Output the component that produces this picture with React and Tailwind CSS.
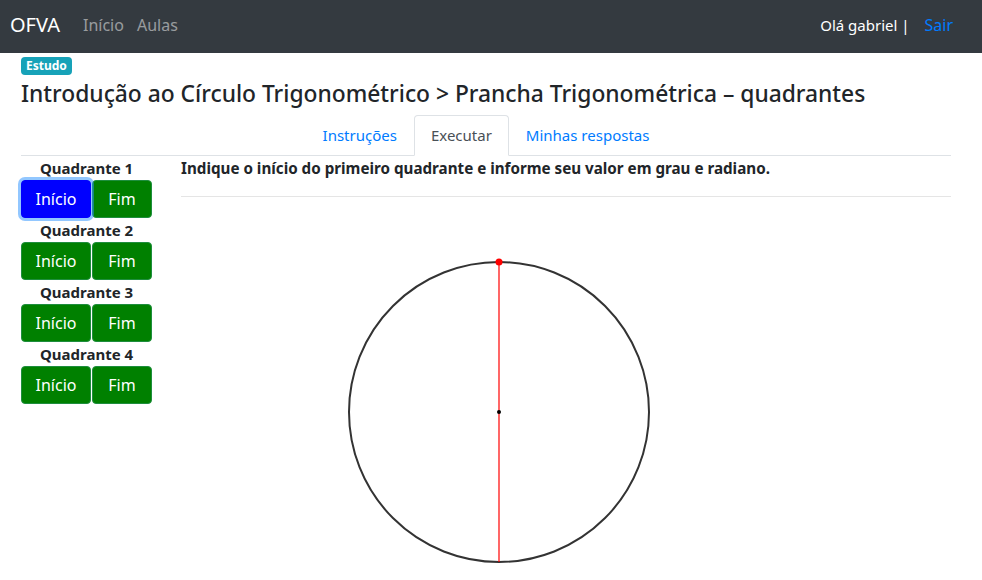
import React from 'react';

const font = { fontFamily: '"Noto Sans", "Segoe UI", Roboto, sans-serif' };

const quadrantes = [1, 2, 3, 4];

const Navbar = () => (
  <nav className="h-[53px] bg-[#343a40] flex items-center pl-[10px] pr-[29px] pb-[3px]">
    <span className="text-[20px] text-white mr-[23px]">OFVA</span>
    <a className="text-[16px] text-white/50 pr-[13px]">Início</a>
    <a className="text-[16px] text-white/50">Aulas</a>
    <div className="ml-auto flex items-center text-[15px]">
      <span className="text-white">Olá gabriel |</span>
      <a className="text-[#007bff] ml-[15px] text-[16px]">Sair</a>
    </div>
  </nav>
);

export default function App() {
  return (
    <div className="min-h-screen bg-white text-[#212529] overflow-hidden" style={font}>
      <Navbar />
      <div className="pl-[21px] pr-[31px]">
        <div className="mt-[4px] h-[18px] flex">
          <span className="flex items-center bg-[#17a2b8] text-white text-[12px] font-bold leading-none px-[5px] rounded-[4px]">
            Estudo
          </span>
        </div>
        <h4 className="text-[22.8px] leading-[29px] mt-[4px] mb-[7px] font-medium">
          Introdução ao Círculo Trigonométrico &gt; Prancha Trigonométrica – quadrantes
        </h4>

        <ul className="flex justify-center border-b border-[#dee2e6] h-[41px]">
          <li className="px-4 pt-[8px] text-[15px] text-[#007bff] border border-transparent">Instruções</li>
          <li className="px-4 pt-[8px] text-[15px] text-[#495057] bg-white border border-[#dee2e6] border-b-white rounded-t-[4px] -mb-px">
            Executar
          </li>
          <li className="px-4 pt-[8px] text-[15px] text-[#007bff] border border-transparent">Minhas respostas</li>
        </ul>

        <div className="flex">
          <div className="w-[131px] shrink-0">
            {quadrantes.map((q) => (
              <div key={q}>
                <div className="h-[24px] leading-[24px] text-center font-bold text-[15px]">Quadrante {q}</div>
                <div className="flex h-[38px]">
                  <button
                    className={
                      q === 1
                        ? 'w-[70px] h-full rounded-[4px] bg-[#0000ff] text-white text-[16px] border border-[#0000ff] shadow-[0_0_0_3px_rgba(38,143,255,0.5)] relative z-10'
                        : 'w-[70px] h-full rounded-[4px] bg-[#008000] text-white text-[16px] border border-[#1e8e3e]'
                    }
                  >
                    Início
                  </button>
                  <button className="ml-px w-[60px] h-full rounded-[4px] bg-[#008000] text-white text-[16px] border border-[#1e8e3e]">
                    Fim
                  </button>
                </div>
              </div>
            ))}
          </div>

          <div className="flex-1 ml-[29px]">
            <p className="font-bold text-[15.2px] leading-[24px] h-[24px]">
              Indique o início do primeiro quadrante e informe seu valor em grau e radiano.
            </p>
            <hr className="mt-[16px] border-t border-[#e5e5e5]" />
            <svg width="770" height="400" className="block">
              <circle cx="318" cy="215" r="150" fill="none" stroke="#333" strokeWidth="2" />
              <line x1="318" y1="65" x2="318" y2="365" stroke="red" strokeWidth="1.2" />
              <circle cx="318" cy="65" r="3.5" fill="red" />
              <circle cx="318" cy="215" r="2" fill="#000" />
            </svg>
          </div>
        </div>
      </div>
    </div>
  );
}
